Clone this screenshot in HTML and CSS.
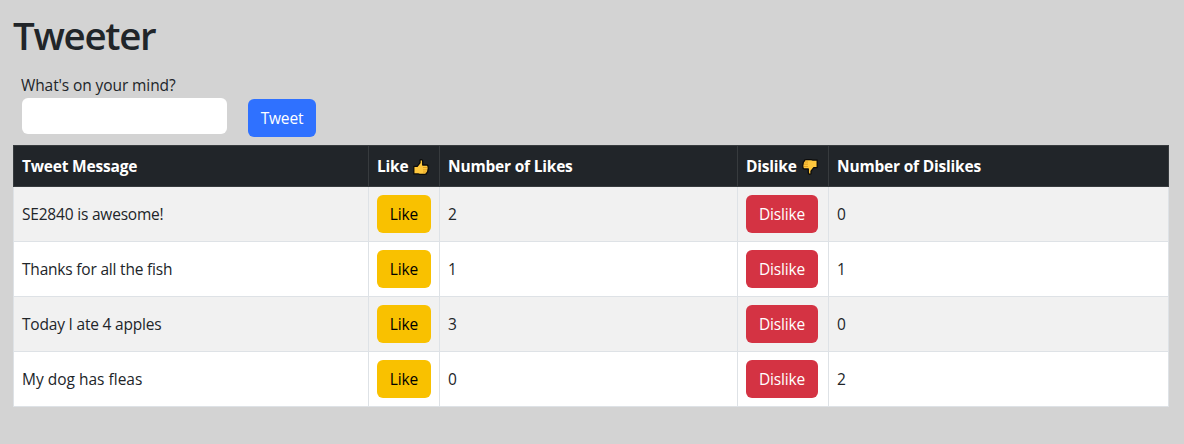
FILE: index.html
```html
<!DOCTYPE html>
<html lang="en">
<head>
<meta charset="utf-8">
<title>Tweeter</title>
<link rel="stylesheet" href="styles.css">
</head>
<body>
<svg class="defs" aria-hidden="true">
  <symbol id="thumb" viewBox="0 0 16 16">
    <path d="M.8 7.4H4.2L7 3.8V1.6Q7.1.7 8 .7 9.7.7 9.7 2.8V6H13.7Q15.3 6.2 15 7.8L15.3 9.5 14.9 11 14.7 12.8 13.8 13.7Q13.6 15.3 12 15.3H6.8L5 14.9H.8Z" fill="#ffc83d" stroke="#0b0b0b" stroke-width="1.3" stroke-linejoin="round"/>
    <path d="M10 8.5H14.3M10 10.8H14.2M10 13H13.4" fill="none" stroke="#d9951f" stroke-width=".8"/>
  </symbol>
</svg>
<main class="page">
  <h1 class="title">Tweeter</h1>
  <form class="composer">
    <div class="field">
      <label class="label" for="message">What's on your mind?</label>
      <input class="input" id="message" type="text">
    </div>
    <button class="btn btn-tweet" type="button">Tweet</button>
  </form>
  <table class="tweets">
    <colgroup><col class="c-message"><col class="c-like"><col class="c-likes"><col class="c-dislike"><col class="c-dislikes"></colgroup>
    <thead>
      <tr><th>Tweet Message</th><th><span class="heading">Like <svg class="thumb"><use href="#thumb"/></svg></span></th><th>Number of Likes</th><th><span class="heading">Dislike <svg class="thumb thumb-down"><use href="#thumb"/></svg></span></th><th>Number of Dislikes</th></tr>
    </thead>
    <tbody>
      <tr><td>SE2840 is awesome!</td><td><button class="btn btn-like">Like</button></td><td>2</td><td><button class="btn btn-dislike">Dislike</button></td><td>0</td></tr>
      <tr><td>Thanks for all the fish</td><td><button class="btn btn-like">Like</button></td><td>1</td><td><button class="btn btn-dislike">Dislike</button></td><td>1</td></tr>
      <tr><td>Today I ate 4 apples</td><td><button class="btn btn-like">Like</button></td><td>3</td><td><button class="btn btn-dislike">Dislike</button></td><td>0</td></tr>
      <tr><td class="loose">My dog has fleas</td><td><button class="btn btn-like">Like</button></td><td>0</td><td><button class="btn btn-dislike">Dislike</button></td><td>2</td></tr>
    </tbody>
  </table>
</main>
</body>
</html>
```
FILE: styles.css
```css
* { box-sizing: border-box; }
body {
  margin: 0;
  background: #d3d3d3;
  color: #212529;
  font: 400 15.5px/24px "Segoe UI", "Open Sans", "Noto Sans", sans-serif;
}
.defs { display: none; }
.page { padding: 11px 15px 0 13px; }
.title { margin: 0; font-size: 38.5px; font-weight: 600; line-height: 48px; letter-spacing: -1.3px; }
.composer { display: flex; align-items: flex-end; gap: 21px; padding: 14px 0 8px 8px; }
.field { width: 206px; padding-bottom: 3px; }
.label { display: block; height: 25px; line-height: 25px; letter-spacing: -.1px; }
.input {
  display: block;
  width: 205px;
  height: 36px;
  margin-left: 1px;
  padding: 6px 12px;
  border: 0;
  border-radius: 6px;
  background: #fff;
  font: inherit;
}
.btn {
  display: block;
  height: 38px;
  padding: 0;
  border: 0;
  border-radius: 6px;
  font: inherit;
  letter-spacing: -.15px;
  text-align: center;
}
.btn-tweet { width: 68px; background: #2f71ff; color: #fff; }
.btn-like { width: 54px; background: #f9c100; color: #000; }
.btn-dislike { width: 72px; background: #d43343; color: #fff; }
.tweets { width: 1156px; table-layout: fixed; border-collapse: collapse; letter-spacing: -.2px; }
.c-message { width: 355px; }
.c-like { width: 71px; }
.c-likes { width: 298px; }
.c-dislike { width: 91px; }
.tweets th, .tweets td {
  padding: 8px;
  border: 1px solid #dee2e6;
  text-align: left;
  vertical-align: middle;
  white-space: nowrap;
}
.tweets th { height: 41px; background: #212529; border-color: #373b3e; color: #fff; font-weight: 700; line-height: 24px; }
.tweets td { background: #fff; }
.tweets .loose { letter-spacing: 0; }
.tweets tbody tr:nth-child(odd) td { background: #f1f1f1; }
.heading { display: flex; align-items: center; justify-content: space-between; width: 52px; height: 24px; }
.thumb { flex: none; width: 16px; height: 16px; margin-top: 1px; }
.thumb-down { transform: rotate(180deg); }
th:nth-child(4) .heading { width: 72px; }
```
